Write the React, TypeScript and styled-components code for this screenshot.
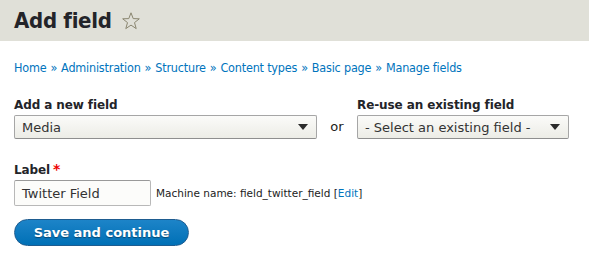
import React from 'react';
import styled, { createGlobalStyle } from 'styled-components';

const GlobalStyle = createGlobalStyle`
  html, body {
    margin: 0;
    padding: 0;
    background: #ffffff;
  }
  body {
    font-family: "DejaVu Sans", "Liberation Sans", sans-serif;
    color: #222330;
  }
`;

const Page = styled.div`
  width: 589px;
  height: 267px;
  overflow: hidden;
`;

const Header = styled.header`
  background: #e0e0d8;
  height: 41px;
  padding: 0 14px;
  display: flex;
  align-items: center;
  gap: 9px;
`;

const Title = styled.h1`
  margin: 0;
  font-family: "DejaVu Sans Condensed", "DejaVu Sans", sans-serif;
  font-size: 22px;
  font-weight: bold;
  color: #232429;
  letter-spacing: -0.3px;
`;

const Star = styled.svg`
  width: 20px;
  height: 20px;
  margin-top: 1px;
`;

const Content = styled.main`
  padding: 19px 14px 0;
`;

const Breadcrumb = styled.nav`
  font-family: "DejaVu Sans Condensed", "DejaVu Sans", sans-serif;
  font-size: 12.5px;
  letter-spacing: -0.2px;
  color: #0074bd;
  display: flex;
  gap: 4px;
`;

const Crumb = styled.a`
  color: #0074bd;
  text-decoration: none;
`;

const FieldRow = styled.div`
  display: flex;
  align-items: flex-end;
  margin-top: 23px;
`;

const FieldGroup = styled.div`
  display: flex;
  flex-direction: column;
  gap: 3px;
`;

const FieldLabel = styled.label`
  font-size: 12px;
  font-weight: bold;
  color: #232429;
  letter-spacing: -0.1px;
`;

const Required = styled.span`
  color: #e00;
  margin-left: 3px;
  font-size: 14px;
`;

const Select = styled.div<{ width: number }>`
  width: ${p => p.width}px;
  height: 24px;
  box-sizing: border-box;
  border: 1px solid #a6a6a6;
  border-bottom-color: #8e8e8e;
  border-radius: 2px;
  background: linear-gradient(#fbfbf9, #ececE6);
  display: flex;
  align-items: center;
  justify-content: space-between;
  padding: 0 8px 0 7px;
  font-size: 13px;
  color: #333;
`;

const Caret = styled.span`
  width: 0;
  height: 0;
  border-left: 5px solid transparent;
  border-right: 5px solid transparent;
  border-top: 6px solid #2b2b2b;
`;

const Or = styled.span`
  font-size: 13px;
  color: #222;
  width: 40px;
  text-align: center;
  padding-bottom: 5px;
`;

const LabelBlock = styled.div`
  margin-top: 22px;
  display: flex;
  flex-direction: column;
  gap: 3px;
`;

const InputRow = styled.div`
  display: flex;
  align-items: center;
  gap: 5px;
`;

const TextInput = styled.div`
  width: 137px;
  height: 26px;
  box-sizing: border-box;
  border: 1px solid #b8b8b8;
  border-top-color: #999;
  border-radius: 2px;
  background: #fcfcfa;
  display: flex;
  align-items: center;
  padding: 0 7px;
  font-size: 13px;
  color: #333;
`;

const MachineName = styled.span`
  font-size: 10.5px;
  color: #222;
`;

const EditLink = styled.a`
  color: #0074bd;
  text-decoration: none;
`;

const Button = styled.button`
  margin-top: 13px;
  width: 175px;
  height: 27px;
  border-radius: 14px;
  border: 1px solid #1e5c90;
  background: linear-gradient(#1d84c8, #0070b6);
  color: #fff;
  font-family: "DejaVu Sans", sans-serif;
  font-weight: bold;
  font-size: 13px;
  text-shadow: 0 1px 1px rgba(0, 0, 0, 0.4);
  padding: 0;
  cursor: pointer;
`;

const crumbs = ['Home', 'Administration', 'Structure', 'Content types', 'Basic page', 'Manage fields'];

export default function App() {
  return (
    <Page>
      <GlobalStyle />
      <Header>
        <Title>Add field</Title>
        <Star viewBox="0 0 20 20">
          <path
            d="M10 1.8 L12.2 7.6 L18.3 7.8 L13.5 11.6 L15.2 17.6 L10 14.1 L4.8 17.6 L6.5 11.6 L1.7 7.8 L7.8 7.6 Z"
            fill="none"
            stroke="#8a8670"
            strokeWidth="1"
            strokeLinejoin="miter"
          />
        </Star>
      </Header>
      <Content>
        <Breadcrumb>
          {crumbs.map((c, i) => (
            <React.Fragment key={c}>
              {i > 0 && <span>»</span>}
              <Crumb href="#">{c}</Crumb>
            </React.Fragment>
          ))}
        </Breadcrumb>
        <FieldRow>
          <FieldGroup>
            <FieldLabel>Add a new field</FieldLabel>
            <Select width={303}>
              <span>Media</span>
              <Caret />
            </Select>
          </FieldGroup>
          <Or>or</Or>
          <FieldGroup>
            <FieldLabel>Re-use an existing field</FieldLabel>
            <Select width={212}>
              <span>- Select an existing field -</span>
              <Caret />
            </Select>
          </FieldGroup>
        </FieldRow>
        <LabelBlock>
          <FieldLabel>
            Label<Required>*</Required>
          </FieldLabel>
          <InputRow>
            <TextInput>Twitter Field</TextInput>
            <MachineName>
              Machine name: field_twitter_field [<EditLink href="#">Edit</EditLink>]
            </MachineName>
          </InputRow>
        </LabelBlock>
        <Button>Save and continue</Button>
      </Content>
    </Page>
  );
}
